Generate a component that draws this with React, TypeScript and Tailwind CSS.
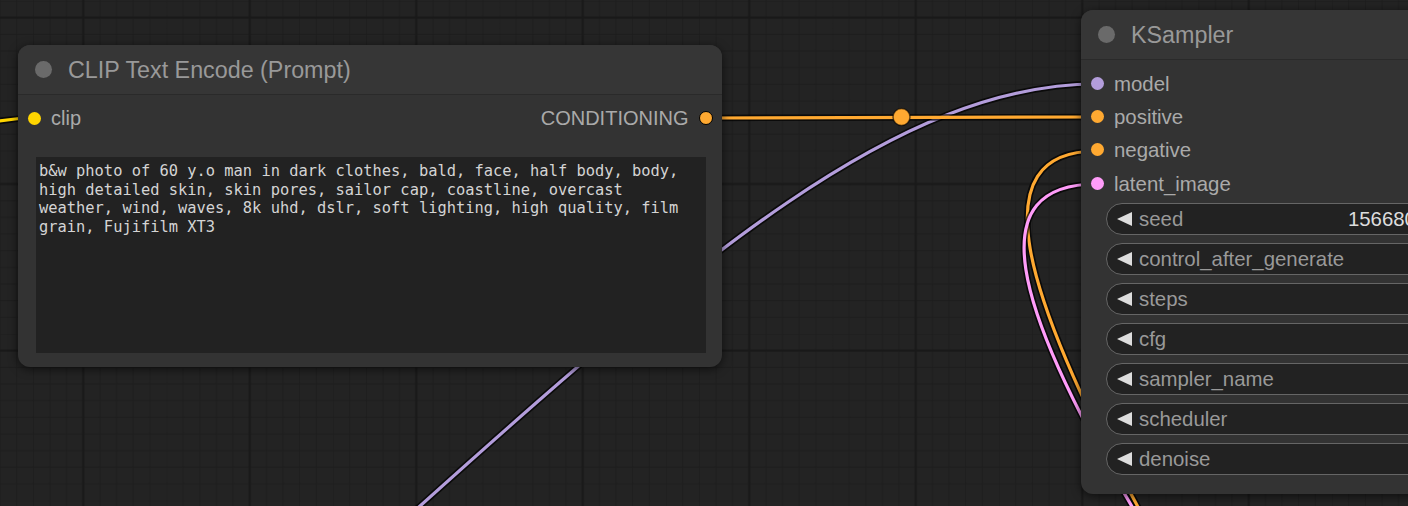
import React from "react";

const sans = "font-['Liberation_Sans',Arial,sans-serif]";

type Slot = { name: string; dot: string };

const ksamplerInputs: Slot[] = [
  { name: "model", dot: "bg-[#B39DDB]" },
  { name: "positive", dot: "bg-[#FFA931]" },
  { name: "negative", dot: "bg-[#FFA931]" },
  { name: "latent_image", dot: "bg-[#FF9CF9]" },
];

const widgets = [
  { label: "seed", value: "156680208700286" },
  { label: "control_after_generate", value: "randomize" },
  { label: "steps", value: "20" },
  { label: "cfg", value: "8.0" },
  { label: "sampler_name", value: "euler" },
  { label: "scheduler", value: "normal" },
  { label: "denoise", value: "1.00" },
];

const prompt =
  "b&w photo of 60 y.o man in dark clothes, bald, face, half body, body, high detailed skin, skin pores, sailor cap, coastline, overcast weather, wind, waves, 8k uhd, dslr, soft lighting, high quality, film grain, Fujifilm XT3";

function Wire({ d, color }: { d: string; color: string }) {
  return (
    <g fill="none" strokeLinecap="round">
      <path d={d} stroke="#000" strokeOpacity={0.7} strokeWidth={6.5} />
      <path d={d} stroke={color} strokeWidth={3.2} />
    </g>
  );
}

function Canvas() {
  const minor = 16.65;
  const lines = Array.from({ length: 10 }, (_, i) => i * minor);
  return (
    <svg className="absolute inset-0" width={1408} height={506}>
      <defs>
        <pattern id="grid" x={0} y={1} width={166.5} height={166.5} patternUnits="userSpaceOnUse">
          <rect width={166.5} height={166.5} fill="#232323" />
          {lines.map((p) => (
            <g key={p}>
              <line x1={p} y1={0} x2={p} y2={166.5} stroke="#1d1d1d" strokeWidth={1} />
              <line x1={0} y1={p} x2={166.5} y2={p} stroke="#1d1d1d" strokeWidth={1} />
            </g>
          ))}
          <line x1={83.25} y1={0} x2={83.25} y2={166.5} stroke="#191919" strokeWidth={2.2} />
          <line x1={0} y1={16.65} x2={166.5} y2={16.65} stroke="#191919" strokeWidth={2.2} />
        </pattern>
      </defs>
      <rect width={1408} height={506} fill="url(#grid)" />

      <Wire d="M -120 140 C -50 140 -20 118 34 118" color="#FFD500" />
      <Wire d="M 400 524 C 700 254 900 84 1097 84" color="#B39DDB" />
      <Wire d="M 1097 151 C 980 151 1020 290 1145 520" color="#FFA931" />
      <Wire d="M 1097 184 C 982 184 1008 300 1140 520" color="#FF9CF9" />
      <Wire d="M 706 118 L 1097 117" color="#FFA931" />
      <circle cx={901.5} cy={117} r={8.5} fill="#FFA931" stroke="#000" strokeOpacity={0.6} strokeWidth={1.5} />
    </svg>
  );
}

function Title({ text }: { text: string }) {
  return (
    <div className="flex h-[50px] items-center gap-4 border-b border-[#2a2a2a] bg-[#363636] pl-[17px]">
      <span className="h-[17px] w-[17px] rounded-full bg-[#6a6a6a]" />
      <span className="pt-[2px] text-[23.3px] leading-none text-[#999]">{text}</span>
    </div>
  );
}

function LeftArrow() {
  return (
    <svg width={15} height={14} viewBox="0 0 15 14" className="shrink-0">
      <polygon points="0,7 15,0 15,14" fill="#ddd" />
    </svg>
  );
}

function RightArrow() {
  return (
    <svg width={15} height={14} viewBox="0 0 15 14" className="shrink-0">
      <polygon points="15,7 0,0 0,14" fill="#ddd" />
    </svg>
  );
}

function ClipNode() {
  return (
    <div
      className={`absolute left-[18px] top-[45px] flex h-[322px] w-[704px] flex-col overflow-hidden rounded-[12px] bg-[#333] shadow-[0_2px_10px_rgba(0,0,0,0.6)] ${sans}`}
    >
      <Title text="CLIP Text Encode (Prompt)" />
      <div className="pt-[6.7px]">
        <div className="flex h-[33.3px] items-center justify-between pl-[9.5px] pr-[9.5px]">
          <div className="flex items-center gap-[10.5px]">
            <span className="h-[13px] w-[13px] rounded-full bg-[#FFD500]" />
            <span className="text-[20px] leading-none text-[#aaa]">clip</span>
          </div>
          <div className="flex items-center gap-[10px]">
            <span className="text-[20px] leading-none text-[#aaa]">CONDITIONING</span>
            <span className="h-[14px] w-[14px] rounded-full border-[1.5px] border-black bg-[#FFA931]" />
          </div>
        </div>
      </div>
      <div className="mx-[18px] mb-[14px] mr-[16px] mt-[22px] flex-1 bg-[#222] pl-[3px] pr-[12px] pt-[5px]">
        <p className="whitespace-pre-wrap break-words font-['DejaVu_Sans_Mono',monospace] text-[15.4px] leading-[18.7px] text-[#d4d4d4]">
          {prompt}
        </p>
      </div>
    </div>
  );
}

function KSamplerNode() {
  return (
    <div
      className={`absolute left-[1081px] top-[10px] flex h-[484px] w-[525px] flex-col overflow-hidden rounded-[12px] bg-[#333] shadow-[0_2px_10px_rgba(0,0,0,0.6)] ${sans}`}
    >
      <Title text="KSampler" />
      <div className="flex flex-col pt-[6.7px]">
        {ksamplerInputs.map((s) => (
          <div key={s.name} className="flex h-[33.3px] items-center gap-[10.5px] pl-[9.5px]">
            <span className={`h-[13px] w-[13px] rounded-full ${s.dot}`} />
            <span className="pt-[1px] text-[20.4px] leading-none text-[#aaa]">{s.name}</span>
          </div>
        ))}
      </div>
      <div className="mt-[3px] flex flex-col gap-[8px] px-[25px]">
        {widgets.map((w) => (
          <div
            key={w.label}
            className="flex h-[32px] items-center rounded-full border border-[#666] bg-[#222] pl-[10px] pr-[10px]"
          >
            <LeftArrow />
            <span className="ml-[7px] text-[20.4px] leading-none text-[#999]">{w.label}</span>
            <span className="ml-auto mr-[37px] text-[20.4px] leading-none text-[#ddd]">{w.value}</span>
            <RightArrow />
          </div>
        ))}
      </div>
    </div>
  );
}

export default function App() {
  return (
    <div className="relative h-[506px] w-[1408px] overflow-hidden bg-[#232323]">
      <Canvas />
      <ClipNode />
      <KSamplerNode />
    </div>
  );
}
